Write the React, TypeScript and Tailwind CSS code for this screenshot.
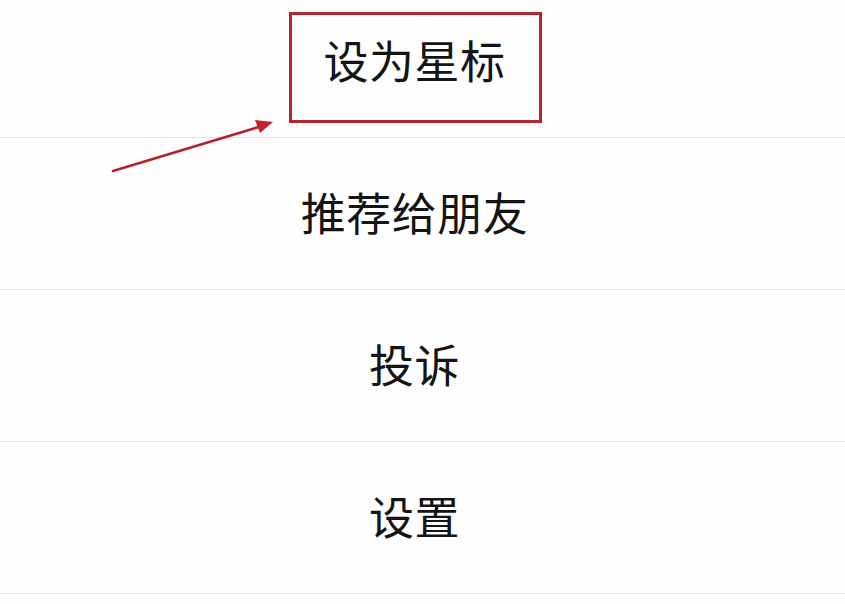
const items = ["设为星标", "推荐给朋友", "投诉", "设置"];

const MenuRow = ({ label }: { label: string }) => (
  <div className="h-[152px] flex items-center justify-center border-b border-[#e3e3e3] pr-[16px]">
    <span className="text-[45px] leading-none text-[#141414] tracking-[0.5px] pb-[4px]">{label}</span>
  </div>
);

export default function App() {
  return (
    <div
      className="relative w-[845px] h-[604px] overflow-hidden bg-[#fefefe]"
      style={{ fontFamily: '"Noto Sans CJK SC", "Noto Sans", sans-serif' }}
    >
      <div className="-mt-[14px] flex flex-col">
        {items.map((label) => (
          <MenuRow key={label} label={label} />
        ))}
      </div>

      {/* highlight box */}
      <div className="absolute left-[289px] top-[12px] w-[253px] h-[111px] border-[3px] border-[#b3262c]" />

      {/* pointer arrow */}
      <svg className="absolute left-0 top-0" width="845" height="604" viewBox="0 0 845 604">
        <line x1="113" y1="171" x2="262" y2="126" stroke="#b3222a" strokeWidth="2.6" strokeLinecap="round" />
        <polygon points="273,122 255,120 260,133" fill="#c8202a" />
      </svg>
    </div>
  );
}
